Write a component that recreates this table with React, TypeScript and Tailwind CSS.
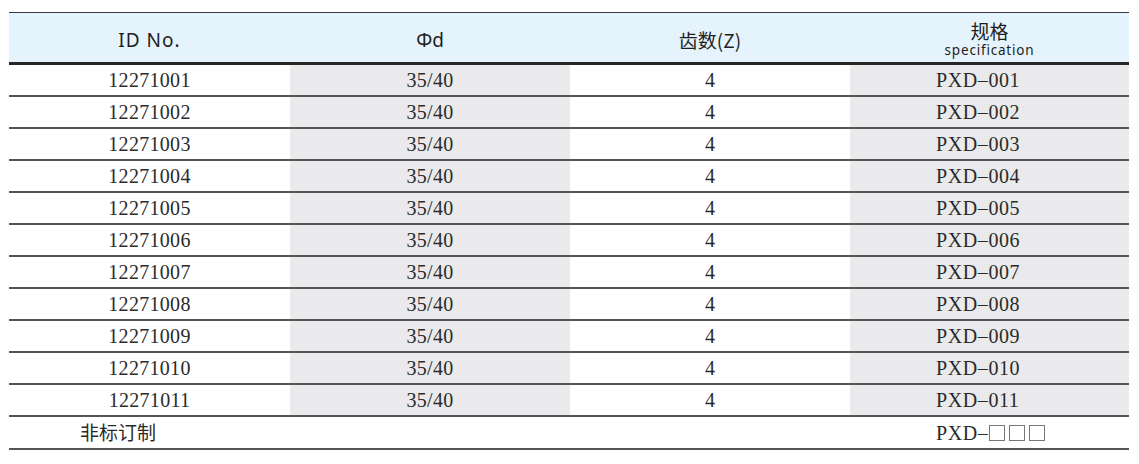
import React from "react";

const rows = Array.from({ length: 11 }, (_, i) => {
  const n = String(i + 1).padStart(3, "0");
  return { id: `12271${n}`, d: "35/40", z: "4", spec: `PXD–${n}` };
});

const serif = "font-['Liberation_Serif','Times_New_Roman',serif]";
const sans = "font-['Noto_Sans','Noto_Sans_CJK_SC',sans-serif]";

export default function App() {
  return (
    <div className="w-[1139px] h-[464px] bg-white pt-[12px] pl-[9px]">
      <div className="w-[1120px] border-t border-[#3a3a3a]">
        <div
          className={`grid grid-cols-[281px_280px_280px_279px] h-[52px] bg-[#e5f4fc] border-b-[3px] border-[#262626] text-[#1e1e1e] ${sans}`}
        >
          <div className="flex items-center justify-center pt-[5px] text-[19px] tracking-[1px]">ID No.</div>
          <div className="flex items-center justify-center pt-[5px] text-[19px]">Φd</div>
          <div className="flex items-center justify-center pt-[5px] text-[19px] font-['Noto_Sans_CJK_SC',sans-serif]">齿数(Z)</div>
          <div className="flex flex-col items-center justify-center pt-[3px]">
            <span className="text-[19px] font-['Noto_Sans_CJK_SC',sans-serif] leading-[19px]">规格</span>
            <span className="mt-[3px] text-[13.5px] tracking-[0.8px] leading-[15px]">specification</span>
          </div>
        </div>
        {rows.map((r) => (
          <div
            key={r.id}
            className={`grid grid-cols-[281px_280px_280px_279px] h-[32px] border-b-2 border-[#555] text-[20px] text-[#2a2a2a] ${serif}`}
          >
            <div className="flex items-center justify-center tracking-[0.3px]">{r.id}</div>
            <div className="flex items-center justify-center bg-[#eaeaec] tracking-[0.3px]">{r.d}</div>
            <div className="flex items-center justify-center">{r.z}</div>
            <div className="flex items-center pl-[86px] bg-[#eaeaec] tracking-[0.6px]">{r.spec}</div>
          </div>
        ))}
        <div
          className={`grid grid-cols-[281px_280px_280px_279px] h-[33px] border-b-2 border-[#555] text-[19px] text-[#2a2a2a]`}
        >
          <div className="flex items-center pl-[71px] font-['Noto_Sans_CJK_SC',sans-serif]">非标订制</div>
          <div></div>
          <div></div>
          <div className={`flex items-center pl-[86px] text-[20px] tracking-[0.6px] ${serif}`}>
            PXD–
            <span className="flex items-center gap-[4px] ml-[1px]">
              <span className="w-[16px] h-[16px] border border-[#777]"></span>
              <span className="w-[16px] h-[16px] border border-[#777]"></span>
              <span className="w-[16px] h-[16px] border border-[#777]"></span>
            </span>
          </div>
        </div>
      </div>
    </div>
  );
}
